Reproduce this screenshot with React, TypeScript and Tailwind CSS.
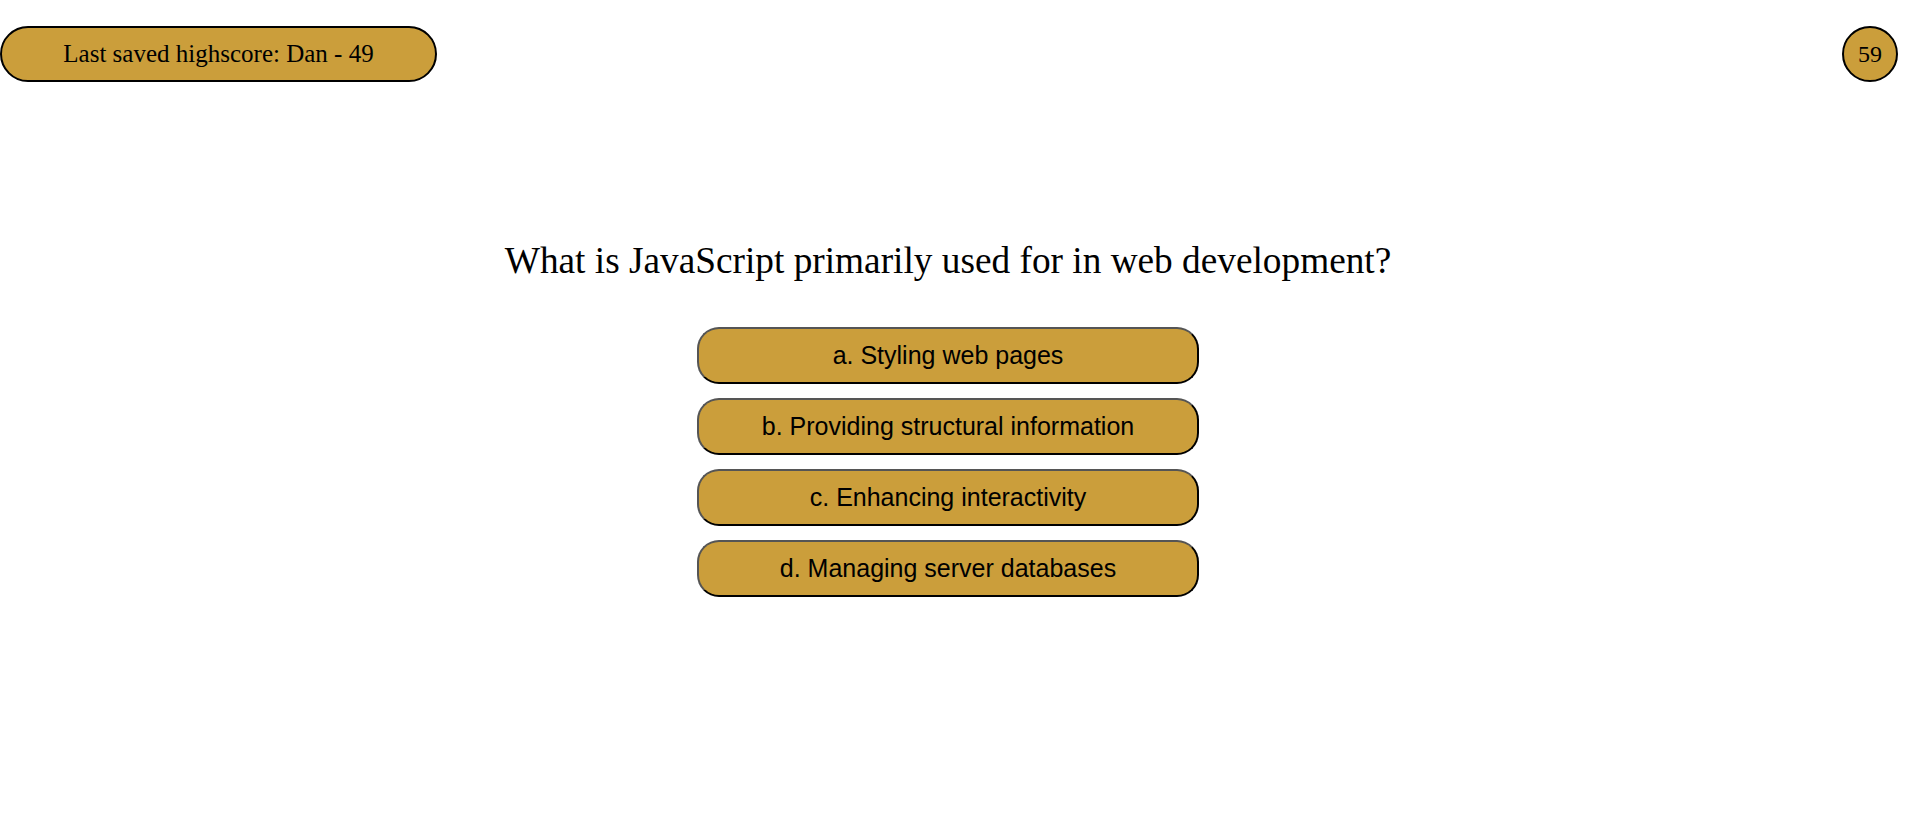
const answers = [
  "a. Styling web pages",
  "b. Providing structural information",
  "c. Enhancing interactivity",
  "d. Managing server databases",
];

export default function App() {
  return (
    <div className="min-h-screen bg-white text-black">
      <header className="flex justify-between items-start pt-[26px] pr-[8px]">
        <div className="w-[437px] h-[56px] flex items-center justify-center rounded-[28px] border-2 border-black bg-[#cb9e3b] font-['Liberation_Serif',serif] text-[25px]">
          Last saved highscore: Dan - 49
        </div>
        <div className="w-[56px] h-[56px] flex items-center justify-center rounded-full border-2 border-black bg-[#cb9e3b] font-['Liberation_Serif',serif] text-[24px]">
          59
        </div>
      </header>

      <main className="flex flex-col items-center mt-[158px] pr-[10px]">
        <h1 className="font-['Liberation_Serif',serif] text-[37.3px] leading-[42px]">
          What is JavaScript primarily used for in web development?
        </h1>
        <div className="flex flex-col gap-[14px] mt-[45px]">
          {answers.map((a) => (
            <button
              key={a}
              className="w-[502px] h-[57px] rounded-[22px] border-2 border-[#555] border-r-black border-b-black bg-[#cb9e3b] font-['Liberation_Sans',sans-serif] text-[25px]"
            >
              {a}
            </button>
          ))}
        </div>
      </main>
    </div>
  );
}
